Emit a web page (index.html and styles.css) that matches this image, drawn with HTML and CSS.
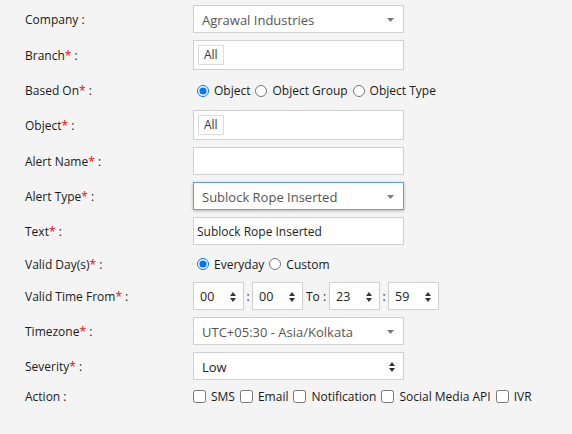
FILE: index.html
```html
<!DOCTYPE html>
<html>
<head>
<meta charset="utf-8">
<link rel="stylesheet" href="styles.css">
</head>
<body>
<div class="form">
  <div class="row h28">
    <div class="lbl">Company :</div>
    <div class="ctl sel"><span class="val">Agrawal Industries</span><svg class="caret" width="7" height="4" viewBox="0 0 7 4"><path d="M0 0H7L3.5 4Z" fill="#7a7a7a"/></svg></div>
  </div>
  <div class="row h30">
    <div class="lbl">Branch<span class="req">*</span> :</div>
    <div class="ctl tagbox"><span class="tag">All</span></div>
  </div>
  <div class="row h26">
    <div class="lbl">Based On<span class="req">*</span> :</div>
    <div class="opts">
      <label class="opt"><input type="radio" name="b" checked>Object</label>
      <label class="opt"><input type="radio" name="b">Object Group</label>
      <label class="opt"><input type="radio" name="b">Object Type</label>
    </div>
  </div>
  <div class="row h30">
    <div class="lbl">Object<span class="req">*</span> :</div>
    <div class="ctl tagbox"><span class="tag">All</span></div>
  </div>
  <div class="row h28">
    <div class="lbl">Alert Name<span class="req">*</span> :</div>
    <div class="ctl txt"></div>
  </div>
  <div class="row h28">
    <div class="lbl">Alert Type<span class="req">*</span> :</div>
    <div class="ctl sel focus"><span class="val">Sublock Rope Inserted</span><svg class="caret" width="7" height="4" viewBox="0 0 7 4"><path d="M0 0H7L3.5 4Z" fill="#7a7a7a"/></svg></div>
  </div>
  <div class="row h28">
    <div class="lbl">Text<span class="req">*</span> :</div>
    <div class="ctl txt"><span class="tv">Sublock Rope Inserted</span></div>
  </div>
  <div class="row h23">
    <div class="lbl">Valid Day(s)<span class="req">*</span> :</div>
    <div class="opts">
      <label class="opt"><input type="radio" name="d" checked>Everyday</label>
      <label class="opt"><input type="radio" name="d">Custom</label>
    </div>
  </div>
  <div class="row h28">
    <div class="lbl">Valid Time From<span class="req">*</span> :</div>
    <div class="times">
      <div class="tsel"><span>00</span><svg class="spin" width="6" height="10" viewBox="0 0 6 10"><path d="M0 4H6L3 0Z M0 6H6L3 10Z" fill="#333"/></svg></div>
      <span class="colon">:</span>
      <div class="tsel"><span>00</span><svg class="spin" width="6" height="10" viewBox="0 0 6 10"><path d="M0 4H6L3 0Z M0 6H6L3 10Z" fill="#333"/></svg></div>
      <span class="to">To :</span>
      <div class="tsel"><span>23</span><svg class="spin" width="6" height="10" viewBox="0 0 6 10"><path d="M0 4H6L3 0Z M0 6H6L3 10Z" fill="#333"/></svg></div>
      <span class="colon">:</span>
      <div class="tsel"><span>59</span><svg class="spin" width="6" height="10" viewBox="0 0 6 10"><path d="M0 4H6L3 0Z M0 6H6L3 10Z" fill="#333"/></svg></div>
    </div>
  </div>
  <div class="row h28">
    <div class="lbl">Timezone<span class="req">*</span> :</div>
    <div class="ctl sel"><span class="val">UTC+05:30 - Asia/Kolkata</span><svg class="caret" width="7" height="4" viewBox="0 0 7 4"><path d="M0 0H7L3.5 4Z" fill="#7a7a7a"/></svg></div>
  </div>
  <div class="row h28">
    <div class="lbl">Severity<span class="req">*</span> :</div>
    <div class="ctl sel sev"><span class="val dark">Low</span><svg class="spin" width="6" height="10" viewBox="0 0 6 10"><path d="M0 4H6L3 0Z M0 6H6L3 10Z" fill="#333"/></svg></div>
  </div>
  <div class="row h18">
    <div class="lbl">Action :</div>
    <div class="opts checks">
      <label class="chk"><input type="checkbox">SMS</label>
      <label class="chk"><input type="checkbox">Email</label>
      <label class="chk"><input type="checkbox">Notification</label>
      <label class="chk"><input type="checkbox">Social Media API</label>
      <label class="chk"><input type="checkbox">IVR</label>
    </div>
  </div>
</div>
</body>
</html>
```
FILE: styles.css
```css
html, body {
  margin: 0;
  padding: 0;
  background: #f4f4f4;
  font-family: "Open Sans", "Liberation Sans", sans-serif;
  font-size: 12px;
  color: #1a1a1a;
}
.form {
  display: flex;
  flex-direction: column;
  gap: 7px;
  padding: 5px 0 0 25px;
}
.row {
  display: flex;
  align-items: center;
}
.h28 { height: 28px; }
.h30 { height: 30px; }
.h26 { height: 26px; }
.h23 { height: 23px; }
.h18 { height: 18px; }
.lbl {
  width: 168px;
  flex: none;
  padding-top: 1px;
}
.req { color: #ff0000; }
.ctl {
  box-sizing: border-box;
  width: 211px;
  height: 100%;
  background: #fff;
  border: 1px solid #cfcfcf;
  display: flex;
  align-items: center;
}
.sel {
  padding: 1px 9px 0 8px;
  justify-content: space-between;
}
.sel .val { color: #555; font-size: 13px; }
.sel .val.dark { color: #222; }
.focus {
  border-color: #5d9cec;
  box-shadow: 0 1px 3px rgba(0,0,0,0.25);
}
.tagbox { padding-left: 4px; }
.tag {
  box-sizing: border-box;
  border: 1px solid #dcdcdc;
  height: 20px;
  line-height: 18px;
  padding: 0 5px;
  font-size: 12px;
  color: #333;
}
.txt { padding: 1px 0 0 3px; }
.tv { font-size: 12px; color: #222; }
.sev { padding-right: 8px; }
.opts {
  display: flex;
  align-items: center;
  padding-top: 1px;
}
.opt {
  display: flex;
  align-items: center;
  margin-right: 1px;
}
.opt input {
  margin: 0 5px 0 4px;
  width: 12px;
  height: 12px;
}
.times {
  display: flex;
  align-items: center;
  height: 100%;
}
.tsel {
  box-sizing: border-box;
  width: 51px;
  height: 100%;
  background: #fff;
  border: 1px solid #cfcfcf;
  display: flex;
  align-items: center;
  justify-content: space-between;
  padding: 1px 7px 0 6px;
  font-size: 12.5px;
  color: #222;
}
.colon { width: 8px; text-align: center; }
.to { margin: 0 3px 0 3px; }
.chk {
  display: flex;
  align-items: center;
  margin-right: 5px;
}
.chk input {
  margin: 0 5px 0 0;
  width: 13px;
  height: 13px;
}
```
